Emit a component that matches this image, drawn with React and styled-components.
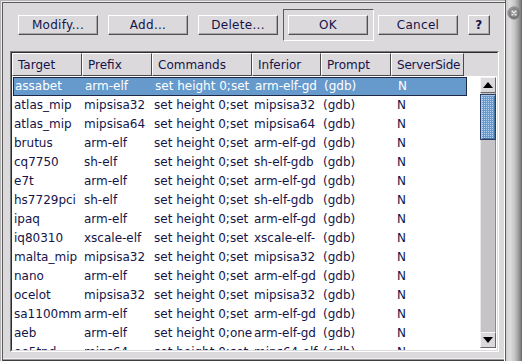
import React from "react";
import styled, { createGlobalStyle } from "styled-components";

const Global = createGlobalStyle`
  html, body { margin: 0; padding: 0; background: #dcd9dc; }
  body { font-family: "DejaVu Sans", "Liberation Sans", sans-serif; font-size: 12px; }
`;

const BG = "#dcd9dc";
const INK = "#14144a";

const Window = styled.div`
  display: flex;
  width: 522px;
  height: 361px;
  background: ${BG};
  overflow: hidden;
`;

const Dialog = styled.div`
  flex: 0 0 505px;
  height: 361px;
  box-sizing: border-box;
  display: flex;
  flex-direction: column;
  padding: 4px 4px 0 4px;
  box-shadow:
    inset 1px 1px 0 #b4b4b4,
    inset 2px 2px 0 #eeeeee,
    inset 3px 3px 0 #5a5a5a,
    inset -1px 0 0 #ffffff,
    inset 0 -1px 0 #3c3c3c,
    inset 0 -2px 0 #9a9a9a,
    inset 0 -3px 0 #eeeeee;
`;

const ButtonBar = styled.div`
  display: flex;
  align-items: center;
  height: 32px;
  margin-top: 5px;
  padding-left: 14px;
`;

const Button = styled.button`
  box-sizing: border-box;
  width: ${(p) => p.$w || 80}px;
  height: 20px;
  margin: 0;
  margin-left: ${(p) => p.$gap || 0}px;
  padding: 0;
  background: ${BG};
  color: ${INK};
  font-family: "DejaVu Sans", "Liberation Sans", sans-serif;
  font-size: 12px;
  font-weight: ${(p) => (p.$bold ? 700 : 400)};
  letter-spacing: 0.3px;
  border: 1px solid;
  border-color: #ffffff #505050 #505050 #ffffff;
  box-shadow: inset -1px -1px 0 #a8a8a8;
  display: flex;
  align-items: center;
  justify-content: center;
  cursor: default;
`;

const DefaultFrame = styled.div`
  box-sizing: border-box;
  height: 32px;
  margin-left: 5px;
  padding: 5px 5px 5px 4px;
  display: flex;
  align-items: center;
  border: 1px solid;
  border-color: #5a5a5a #ffffff #ffffff #5a5a5a;
`;

const TableFrame = styled.div`
  box-sizing: border-box;
  margin: 10px 0 0 6px;
  width: 489px;
  height: 301px;
  border: 1px solid;
  border-color: #7a7a7a #ffffff #ffffff #7a7a7a;
  display: flex;
  flex-direction: column;
`;

const TableInner = styled.div`
  flex: 1;
  display: flex;
  flex-direction: column;
  border-top: 1px solid #2c2c2c;
  border-left: 1px solid #2c2c2c;
  border-right: 1px solid #dcd9dc;
  border-bottom: 1px solid #dcd9dc;
  min-height: 0;
`;

const HeaderRow = styled.div`
  display: flex;
  height: 23px;
  flex: 0 0 23px;
  background: ${BG};
`;

const HeaderCell = styled.div`
  box-sizing: border-box;
  flex: 0 0 ${(p) => p.$w}px;
  height: 23px;
  padding-left: 5px;
  display: flex;
  align-items: center;
  color: ${INK};
  border: 1px solid;
  border-color: #ffffff #4a4a4a #4a4a4a #ffffff;
  white-space: nowrap;
  overflow: hidden;
  letter-spacing: ${(p) => (p.$tight ? "-0.2px" : "0")};
`;

const Body = styled.div`
  flex: 1;
  display: flex;
  background: #ffffff;
  min-height: 0;
  overflow: hidden;
`;

const List = styled.div`
  flex: 1;
  padding-top: 1px;
  overflow: hidden;
`;

const Row = styled.div`
  box-sizing: border-box;
  display: flex;
  height: 19px;
  width: 454px;
  margin-left: ${(p) => (p.$sel ? 1 : 0)}px;
  padding-left: ${(p) => (p.$sel ? 0 : 1)}px;
  background: ${(p) => (p.$sel ? "#6699cc" : "transparent")};
  border: ${(p) => (p.$sel ? "1px solid #1c2a48" : "none")};
  color: ${(p) => (p.$sel ? "#ffffff" : INK)};
  align-items: center;
`;

const Cell = styled.div`
  box-sizing: border-box;
  flex: 0 0 ${(p) => p.$w}px;
  padding-left: ${(p) => p.$pad ?? 1}px;
  white-space: nowrap;
  overflow: hidden;
  line-height: 17px;
`;

const ScrollBar = styled.div`
  flex: 0 0 16px;
  margin: 1px 1px 2px 0;
  display: flex;
  flex-direction: column;
`;

const ArrowButton = styled.div`
  box-sizing: border-box;
  flex: 0 0 16px;
  height: 16px;
  background: ${BG};
  border: 1px solid;
  border-color: #f4f4f4 #6a6a6a #6a6a6a #f4f4f4;
  display: flex;
  align-items: center;
  justify-content: center;
`;

const Trough = styled.div`
  flex: 1;
  background: #c6c4c6;
  border-left: 1px solid #e8e8e8;
  border-right: 1px solid #8a8a8a;
  padding-top: 1px;
`;

const Thumb = styled.div`
  box-sizing: border-box;
  height: 46px;
  margin-left: -1px;
  margin-right: -1px;
  border: 1px solid #2a3e66;
  box-shadow: inset 1px 1px 0 #a9c6e8, inset -1px -1px 0 #4a6fa0;
  background-color: #6699cc;
  background-image: conic-gradient(#b6d2f0 0 25%, transparent 0);
  background-size: 2px 2px;
`;

const Strip = styled.div`
  flex: 1;
  height: 361px;
  border-left: 1px solid #5c5c5c;
  background: linear-gradient(90deg, #cfcfcf 0%, #dedede 25%, #c4c4c4 55%, #9a9a9a 80%, #6a6a6a 100%);
  display: flex;
  justify-content: center;
  padding-top: 6px;
  box-sizing: border-box;
`;

const Up = () => (
  <svg width="10" height="6" viewBox="0 0 10 6"><polygon points="5,0 10,6 0,6" fill="#000" /></svg>
);
const Down = () => (
  <svg width="10" height="6" viewBox="0 0 10 6"><polygon points="0,0 10,0 5,6" fill="#000" /></svg>
);

const CloseIcon = () => (
  <svg width="14" height="14" viewBox="0 0 14 14">
    <defs>
      <radialGradient id="cg" cx="40%" cy="35%" r="70%">
        <stop offset="0" stopColor="#b8b8b8" />
        <stop offset="1" stopColor="#6a6a6a" />
      </radialGradient>
    </defs>
    <circle cx="7" cy="7" r="6.2" fill="url(#cg)" stroke="#8a8a8a" strokeWidth="0.8" />
    <circle cx="7" cy="7" r="4.2" fill="#9a9a9a" stroke="#5a5a5a" strokeWidth="0.6" />
    <path d="M5 5 L9 9 M9 5 L5 9" stroke="#e8e8e8" strokeWidth="1.3" strokeLinecap="round" />
  </svg>
);

const cols = [
  { key: "Target", w: 70 },
  { key: "Prefix", w: 70 },
  { key: "Commands", w: 100 },
  { key: "Inferior", w: 69 },
  { key: "Prompt", w: 70 },
  { key: "ServerSide", w: 73, tight: true },
];

const C = "set height 0;set";
const rows = [
  ["assabet", "arm-elf", C, "arm-elf-gd", "(gdb)", "N"],
  ["atlas_mip", "mipsisa32", C, "mipsisa32", "(gdb)", "N"],
  ["atlas_mip", "mipsisa64", C, "mipsisa64", "(gdb)", "N"],
  ["brutus", "arm-elf", C, "arm-elf-gd", "(gdb)", "N"],
  ["cq7750", "sh-elf", C, "sh-elf-gdb", "(gdb)", "N"],
  ["e7t", "arm-elf", C, "arm-elf-gd", "(gdb)", "N"],
  ["hs7729pci", "sh-elf", C, "sh-elf-gdb", "(gdb)", "N"],
  ["ipaq", "arm-elf", C, "arm-elf-gd", "(gdb)", "N"],
  ["iq80310", "xscale-elf", C, "xscale-elf-", "(gdb)", "N"],
  ["malta_mip", "mipsisa32", C, "mipsisa32", "(gdb)", "N"],
  ["nano", "arm-elf", C, "arm-elf-gd", "(gdb)", "N"],
  ["ocelot", "mipsisa32", C, "mipsisa32", "(gdb)", "N"],
  ["sa1100mm", "arm-elf", C, "arm-elf-gd", "(gdb)", "N"],
  ["aeb", "arm-elf", "set height 0;one", "arm-elf-gd", "(gdb)", "N"],
  ["ee5tnd", "mips64", C, "mips64-elf", "(gdb)", "N"],
];

export default function App() {
  return (
    <>
      <Global />
      <Window>
        <Dialog>
          <ButtonBar>
            <Button $w={80}>Modify...</Button>
            <Button $w={80} $gap={10}>Add...</Button>
            <Button $w={80} $gap={10}>Delete...</Button>
            <DefaultFrame>
              <Button $w={80}>OK</Button>
            </DefaultFrame>
            <Button $w={80} $gap={4}>Cancel</Button>
            <Button $w={22} $gap={10} $bold>?</Button>
          </ButtonBar>
          <TableFrame>
            <TableInner>
              <HeaderRow>
                {cols.map((c) => (
                  <HeaderCell key={c.key} $w={c.w} $tight={c.tight}>{c.key}</HeaderCell>
                ))}
              </HeaderRow>
              <Body>
                <List>
                  {rows.map((r, i) => (
                    <Row key={i} $sel={i === 0}>
                      {r.map((v, j) => (
                        <Cell key={j} $w={cols[j].w} $pad={j === 5 ? 5 : 1}>{v}</Cell>
                      ))}
                    </Row>
                  ))}
                </List>
                <ScrollBar>
                  <ArrowButton><Up /></ArrowButton>
                  <Trough><Thumb /></Trough>
                  <ArrowButton><Down /></ArrowButton>
                </ScrollBar>
              </Body>
            </TableInner>
          </TableFrame>
        </Dialog>
        <Strip>
          <CloseIcon />
        </Strip>
      </Window>
    </>
  );
}
